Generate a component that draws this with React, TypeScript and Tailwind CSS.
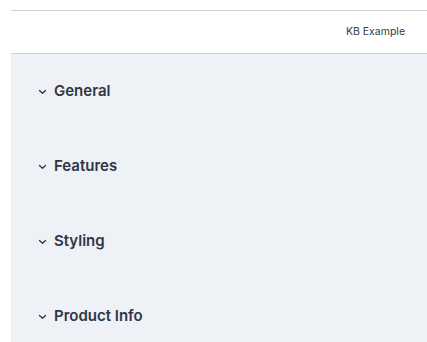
import React from "react";

const sections = ["General", "Features", "Styling", "Product Info"];

function Chevron() {
  return (
    <svg width="9" height="6" viewBox="0 0 9 6" className="shrink-0 mt-[1px]" fill="none">
      <path d="M1.5 1.5 L4.5 4.3 L7.5 1.5" stroke="#2d3748" strokeWidth="1.3" strokeLinecap="round" strokeLinejoin="round" />
    </svg>
  );
}

export default function App() {
  return (
    <div className="w-[427px] h-[342px] bg-white pt-[10px] pl-[11px] overflow-hidden" style={{ fontFamily: "Inter, 'Noto Sans', sans-serif" }}>
      <div className="border-t border-[#c9d4e0] h-[44px] flex items-center justify-end pr-[22px] border-b">
        <span className="text-[10.5px] text-[#333b48]">KB Example</span>
      </div>
      <div className="bg-[#eef1f5] h-[300px]">
        {sections.map((s) => (
          <div key={s} className="h-[75px] flex items-center pl-[27px] gap-[7px] pb-[1px]">
            <Chevron />
            <span className="text-[15px] font-semibold text-[#2d3748] leading-5">{s}</span>
          </div>
        ))}
      </div>
    </div>
  );
}
